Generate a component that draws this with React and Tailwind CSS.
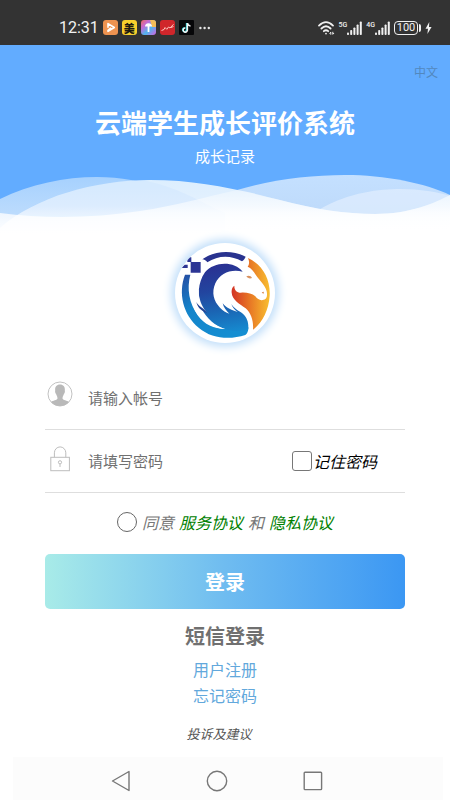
import { useState } from "react";

function SignalBars({ label }) {
  return (
    <span className="flex items-start">
      <span className="font-['Roboto',sans-serif] text-[7px] leading-2 font-medium">{label}</span>
      <svg viewBox="0 0 15 14" className="h-3.5 w-[15px]" fill="currentColor" aria-hidden="true">
        <rect x="0" y="11.5" width="2" height="2.5" rx="0.8" />
        <rect x="3.2" y="9" width="2" height="5" rx="0.8" />
        <rect x="6.4" y="6.5" width="2" height="7.5" rx="0.8" />
        <rect x="9.6" y="3.5" width="2" height="10.5" rx="0.8" />
        <rect x="12.8" y="0.4" width="2" height="13.6" rx="0.8" />
      </svg>
    </span>
  );
}

function AppIcons() {
  return (
    <div className="flex items-center gap-1">
      <svg viewBox="0 0 15 15" className="size-[15px]" aria-hidden="true">
        <rect width="15" height="15" rx="3" fill="#ee9350" />
        <path d="M5 7.2 V3.6 L11.3 7.5 L5 11.4 V10.4 L7.6 8.2" fill="none" stroke="#fff" strokeWidth="1.6" strokeLinejoin="round" strokeLinecap="round" />
      </svg>
      <span className="flex size-[15px] items-center justify-center rounded-[3px] bg-[#f7cf2d] text-[11px] leading-3 font-black text-[#1d1a10]">美</span>
      <svg viewBox="0 0 15 15" className="size-[15px]" aria-hidden="true">
        <defs>
          <linearGradient id="rainbow" x1="0" y1="0" x2="1" y2="1">
            <stop offset="0" stopColor="#ef6a5c" />
            <stop offset="0.3" stopColor="#c46ad8" />
            <stop offset="0.6" stopColor="#4fb6ee" />
            <stop offset="1" stopColor="#d65fe0" />
          </linearGradient>
        </defs>
        <rect width="15" height="15" rx="3" fill="url(#rainbow)" />
        <path d="M9 0 H12 A3 3 0 0 1 15 3 V7 H11Z" fill="#f2bd58" />
        <path d="M4 6.5 Q4 3.4 7.5 3.2 Q11 3.4 11 6.5 H8.4 V12 H6.6 V6.5Z" fill="#fff" />
      </svg>
      <svg viewBox="0 0 15 15" className="size-[15px]" aria-hidden="true">
        <rect width="15" height="15" rx="3" fill="#d0262b" />
        <path d="M1.5 10.5 L4 9.5 L5 7.5 L6.8 9.3 L8.5 7 L10 8 L13.5 4.3 M11 7.5 L13.5 6.5" fill="none" stroke="#ffc4bd" strokeWidth="1" />
      </svg>
      <svg viewBox="0 0 15 15" className="size-[15px]" aria-hidden="true">
        <rect width="15" height="15" rx="1" fill="#060608" />
        <path d="M7.6 3 V9.7 A2 2 0 1 1 5.7 7.7" fill="none" stroke="#35d9dc" strokeWidth="1.5" />
        <path d="M8.4 3.2 V10 A2.1 2.1 0 1 1 6.4 8" fill="none" stroke="#f4f4f4" strokeWidth="1.5" />
        <path d="M8.4 3.2 Q9 5.8 11.5 5.9" fill="none" stroke="#f4f4f4" strokeWidth="1.5" />
      </svg>
      <svg viewBox="0 0 12 4" className="ml-px h-1 w-3" fill="#e8e8e8" aria-hidden="true">
        <circle cx="1.4" cy="2" r="1.2" />
        <circle cx="5.6" cy="2" r="1.2" />
        <circle cx="9.8" cy="2" r="1.2" />
      </svg>
    </div>
  );
}

function StatusBar() {
  return (
    <div className="flex h-[45px] items-center justify-between bg-[#333333] pt-2.5 pr-[18px] pl-[59px] text-[#f1f1f1]">
      <div className="flex items-center gap-1">
        <span className="font-['Roboto',sans-serif] text-base leading-5">12:31</span>
        <AppIcons />
      </div>
      <div className="flex items-center gap-1 font-['Roboto',sans-serif]">
        <svg viewBox="0 0 17 14" className="h-3.5 w-[17px]" fill="none" stroke="currentColor" strokeWidth="1.8" strokeLinecap="round" aria-hidden="true">
          <path d="M1 4.6 Q8 -2.4 15 4.6" />
          <path d="M3.4 7.5 Q8 3 12.6 7.5" />
          <path d="M5.8 10.2 Q8 8.2 10.2 10.2" />
          <circle cx="8" cy="12.6" r="0.9" fill="currentColor" stroke="none" />
          <path d="M11.8 12.3 L12.8 11.2 V13.3 M14.8 11.2 V13.3 L15.8 12.3" strokeWidth="1" />
        </svg>
        <SignalBars label="5G" />
        <SignalBars label="4G" />
        <span className="flex items-center">
          <span className="flex h-3.5 w-6 items-center justify-center rounded-[4px] border border-current text-[11px] leading-3">100</span>
          <span className="ml-px h-2 w-0.5 rounded-r bg-current" />
        </span>
        <svg viewBox="0 0 7 12" className="h-3 w-[7px]" fill="currentColor" aria-hidden="true">
          <path d="M4.3 0 L0.5 6.8 H3 L2.4 12 L6.6 5 H4Z" />
        </svg>
      </div>
    </div>
  );
}

function Waves() {
  return (
    <svg viewBox="0 168 450 75" preserveAspectRatio="none" className="block h-[75px] w-full" aria-hidden="true">
      <defs>
        <linearGradient id="backLeft" gradientUnits="userSpaceOnUse" x1="0" y1="177" x2="0" y2="216">
          <stop offset="0" stopColor="#a6d1fe" />
          <stop offset="1" stopColor="#bddcfd" />
        </linearGradient>
        <linearGradient id="backRight" gradientUnits="userSpaceOnUse" x1="0" y1="175" x2="0" y2="215">
          <stop offset="0" stopColor="#c4e0ff" />
          <stop offset="1" stopColor="#bedafa" />
        </linearGradient>
        <linearGradient id="front" gradientUnits="userSpaceOnUse" x1="0" y1="180" x2="0" y2="232">
          <stop offset="0" stopColor="#dceefe" />
          <stop offset="0.5" stopColor="#e4f1fe" />
          <stop offset="0.8" stopColor="#f8fcff" />
          <stop offset="1" stopColor="#fff" />
        </linearGradient>
        <linearGradient id="haze" gradientUnits="userSpaceOnUse" x1="0" y1="190" x2="0" y2="235">
          <stop offset="0" stopColor="#fff" stopOpacity="0.3" />
          <stop offset="0.5" stopColor="#fff" stopOpacity="0.75" />
          <stop offset="1" stopColor="#fff" />
        </linearGradient>
      </defs>
      <path fill="url(#backRight)" d="M237 190 C270 180 310 175 345 175 C385 175 425 183 450 195 V243 H237Z" />
      <path fill="url(#backLeft)" d="M0 199 C30 184 65 177 97 177 C145 177 180 194 225 213 V243 H0Z" />
      <path fill="#e8f2ff" fillOpacity="0.6" d="M320 209 C350 192 380 189 400 189 C420 189 438 192 450 196 V243 H320Z" />
      <path fill="url(#front)" d="M0 228 C35 197 95 180 150 180 C200 180 240 190 280 200 C315 209 345 214 375 214 C410 214 435 203 450 195 V243 H0Z" />
      <path fill="#62acff" fillOpacity="0.06" d="M0 228 C30 200 85 183 140 180 C175 185 200 202 225 213 V243 H0Z" />
      <path fill="url(#haze)" d="M0 213 C45 219 95 218 140 211 C175 206 205 197 237 190 C255 193 268 197 280 200 C315 209 345 214 375 214 C410 214 435 203 450 195 V243 H0Z" />
    </svg>
  );
}

function HorseLogo() {
  return (
    <svg viewBox="9 9 300 300" className="size-[100px] rounded-full bg-white shadow-[0_0_9px_4px_#c4e0fa]" role="img" aria-label="Logo">
      <defs>
        <linearGradient id="mane" gradientUnits="userSpaceOnUse" x1="130" y1="75" x2="165" y2="290">
          <stop offset="0" stopColor="#2a3192" />
          <stop offset="0.35" stopColor="#22459f" />
          <stop offset="0.65" stopColor="#1a67b5" />
          <stop offset="1" stopColor="#1590d4" />
        </linearGradient>
        <linearGradient id="rim" gradientUnits="userSpaceOnUse" x1="40" y1="105" x2="170" y2="290">
          <stop offset="0" stopColor="#2450a5" />
          <stop offset="0.4" stopColor="#1484ca" />
          <stop offset="1" stopColor="#148ed2" />
        </linearGradient>
        <linearGradient id="face" gradientUnits="userSpaceOnUse" x1="178" y1="0" x2="292" y2="0">
          <stop offset="0" stopColor="#d23226" />
          <stop offset="0.45" stopColor="#e67225" />
          <stop offset="0.8" stopColor="#f2a32b" />
          <stop offset="1" stopColor="#f8bd30" />
        </linearGradient>
      </defs>
      <path fill="#29338f" d="M91 58 C128 31 181 29 221 50 C218 56 215 61 210 64 C176 44 137 46 106 67 C102 62 98 59 91 58Z" />
      <g fill="#2c3594">
        <path d="M56 66 H86 V98 H56Z" />
        <path d="M46 52 H58 V66 H46Z" />
        <path d="M29 84 L38 74 H47 V84Z" />
      </g>
      <path fill="url(#rim)" d="M39 104 H55 C44 146 51 190 78 226 C98 251 127 265 160 267 L229 262 C229 274 226 281 220 285 C174 300 120 297 80 263 C33 224 18 159 39 104Z" />
      <path fill="url(#mane)" d="M212 95 C178 86 144 99 130 130 C118 158 125 184 144 203 C152 211 162 218 172 221 C162 211 155 203 152 190 C164 205 180 211 197 216 C187 209 181 202 178 192 C190 211 206 213 217 226 C227 238 230 251 229 268 C206 276 183 275 158 267 C129 257 103 235 90 207 C75 172 77 128 99 97 C127 63 187 63 212 95Z" />
      <path fill="#fff" d="M80 150 C80 177 89 198 103 216 C93 210 84 201 76 188 C82 215 99 236 121 250 C134 258 147 264 160 267 C126 267 97 254 77 226 C60 200 56 173 61 142Z" />
      <path fill="#244393" d="M73 186 C81 201 94 202 105 218 C92 215 77 205 73 186Z" />
      <path fill="url(#face)" d="M228 54 C272 74 296 117 293 168 C290 211 271 248 243 269 C245 243 238 221 221 205 C203 191 181 181 179 158 C178 148 181 141 187 137 C187 151 194 158 207 158 C224 157 240 160 250 169 C257 178 264 182 272 180 C284 178 287 170 284 154 C280 134 263 123 251 104 C245 94 237 84 227 80 C233 72 232 63 228 54Z" />
      <path fill="#d9925f" d="M223 109 C229 105 237 107 240 114 C234 117 227 115 223 109Z" />
      <path fill="#d98a52" d="M269 157 L276 155 L274 162Z" />
    </svg>
  );
}

function UserIcon() {
  return (
    <svg viewBox="0 0 26 26" className="mb-1 size-[26px] shrink-0" aria-hidden="true">
      <circle cx="13" cy="13" r="12" fill="#fff" stroke="#c2c2c2" />
      <path fill="#b9b9b9" d="M13 3.5 C16.8 3.5 18.2 6.5 17.8 9.5 C18.3 11.5 17 12.5 16.7 13.4 C16.2 14.8 15.6 15.5 15.5 17.2 C15.5 19.2 20.5 19.4 22 21 A12 12 0 0 1 4 21 C5.5 19.4 10.5 19.2 10.5 17.2 C10.4 15.5 9.8 14.8 9.3 13.4 C9 12.5 7.7 11.5 8.2 9.5 C7.8 6.5 9.2 3.5 13 3.5Z" />
    </svg>
  );
}

function LockIcon() {
  return (
    <svg viewBox="0 0 26 26" className="mb-1 size-[26px] shrink-0" fill="none" stroke="#bdbdbd" aria-hidden="true">
      <rect x="3.8" y="11.3" width="18.6" height="13.4" />
      <path d="M7.4 11.3 V6.8 A5.6 5.8 0 0 1 18.8 6.8 V11.3" />
      <circle cx="13" cy="16.3" r="1.6" />
      <path d="M13 17.9 V21" />
    </svg>
  );
}

function NavBar() {
  return (
    <nav className="mt-auto mr-[7px] ml-[13px] flex h-[43px] items-center justify-center gap-[75px] bg-[#fcfcfc] pt-1 pr-[22px]">
      <button type="button" aria-label="返回">
        <svg viewBox="0 0 20 22" className="h-[22px] w-5" fill="none" stroke="#777" strokeWidth="1.4" strokeLinejoin="round" aria-hidden="true">
          <path d="M1.5 11 L18 1.5 V20.5Z" />
        </svg>
      </button>
      <button type="button" aria-label="主页">
        <svg viewBox="0 0 22 22" className="size-[22px]" fill="none" stroke="#777" strokeWidth="1.4" aria-hidden="true">
          <circle cx="11" cy="11" r="9.7" />
        </svg>
      </button>
      <button type="button" aria-label="最近任务">
        <svg viewBox="0 0 20 20" className="size-5" fill="none" stroke="#777" strokeWidth="1.4" aria-hidden="true">
          <rect x="1.2" y="1.2" width="17.4" height="17.4" rx="0.8" />
        </svg>
      </button>
    </nav>
  );
}

export default function App() {
  const [form, setForm] = useState({ account: "", password: "", remember: false, agreed: false });

  function update(field, value) {
    setForm((current) => ({ ...current, [field]: value }));
  }

  return (
    <div className="flex min-h-screen flex-col bg-white font-['Noto_Sans_CJK_SC',sans-serif]">
      <StatusBar />

      <header className="bg-[#62acff] text-center text-white">
        <div className="flex justify-end px-3 pt-[18px]">
          <button type="button" className="text-xs leading-[18px] text-[#5288bd]">中文</button>
        </div>
        <h1 className="mt-[23px] text-[26px] leading-9 font-bold">云端学生成长评价系统</h1>
        <p className="mt-1 text-[15px] leading-6">成长记录</p>
        <Waves />
      </header>

      <main className="flex flex-col items-center px-[45px]">
        <HorseLogo />

        <form className="mt-5 flex w-full flex-col" onSubmit={(event) => event.preventDefault()}>
          <div className="flex h-[67px] items-center gap-[15px] border-b border-[#dedede] pl-0.5">
            <UserIcon />
            <input
              type="text"
              aria-label="帐号"
              placeholder="请输入帐号"
              value={form.account}
              onChange={(event) => update("account", event.target.value)}
              className="h-[26px] min-w-0 flex-1 pt-0.5 text-[15px] leading-6 outline-none placeholder:text-[#707070]"
            />
          </div>

          <div className="flex h-[63px] items-center gap-[15px] border-b border-[#dedede] pr-7 pl-0.5">
            <LockIcon />
            <input
              type="password"
              aria-label="密码"
              placeholder="请填写密码"
              value={form.password}
              onChange={(event) => update("password", event.target.value)}
              className="h-6 min-w-0 flex-1 text-[15px] leading-6 outline-none placeholder:text-[#707070]"
            />
            <label className="flex shrink-0 items-center gap-px text-base leading-6 text-black italic">
              <input
                type="checkbox"
                checked={form.remember}
                onChange={(event) => update("remember", event.target.checked)}
                className="size-5 appearance-none rounded-[3px] border border-[#777] bg-white checked:bg-[#3c97f2]"
              />
              记住密码
            </label>
          </div>

          <div className="mt-[15px] flex items-center justify-center gap-[5px] text-base leading-7 text-[#777] italic">
            <input
              id="agree"
              type="radio"
              checked={form.agreed}
              onChange={() => update("agreed", true)}
              className="size-5 appearance-none rounded-full border border-[#666] bg-white checked:bg-[#3c97f2]"
            />
            <label htmlFor="agree">同意</label>
            <a href="#service" className="text-[#008000]">服务协议</a>
            <span>和</span>
            <a href="#privacy" className="text-[#008000]">隐私协议</a>
          </div>

          <button type="submit" className="mt-[18px] h-[55px] rounded-[5px] bg-linear-to-r from-[#a8ebe8] via-[#6fbcf0] to-[#3b97f3] text-xl font-bold text-white">
            登录
          </button>
        </form>

        <a href="#sms" className="mt-[11px] text-xl leading-8 font-bold text-[#707070]">短信登录</a>
        <a href="#register" className="mt-1 text-base leading-[26px] text-[#62a8dc]">用户注册</a>
        <a href="#forgot" className="text-base leading-[26px] text-[#62a8dc]">忘记密码</a>
        <a href="#feedback" className="mt-4 pr-3 text-[13px] leading-5 text-[#555] italic">投诉及建议</a>
      </main>

      <NavBar />
    </div>
  );
}
